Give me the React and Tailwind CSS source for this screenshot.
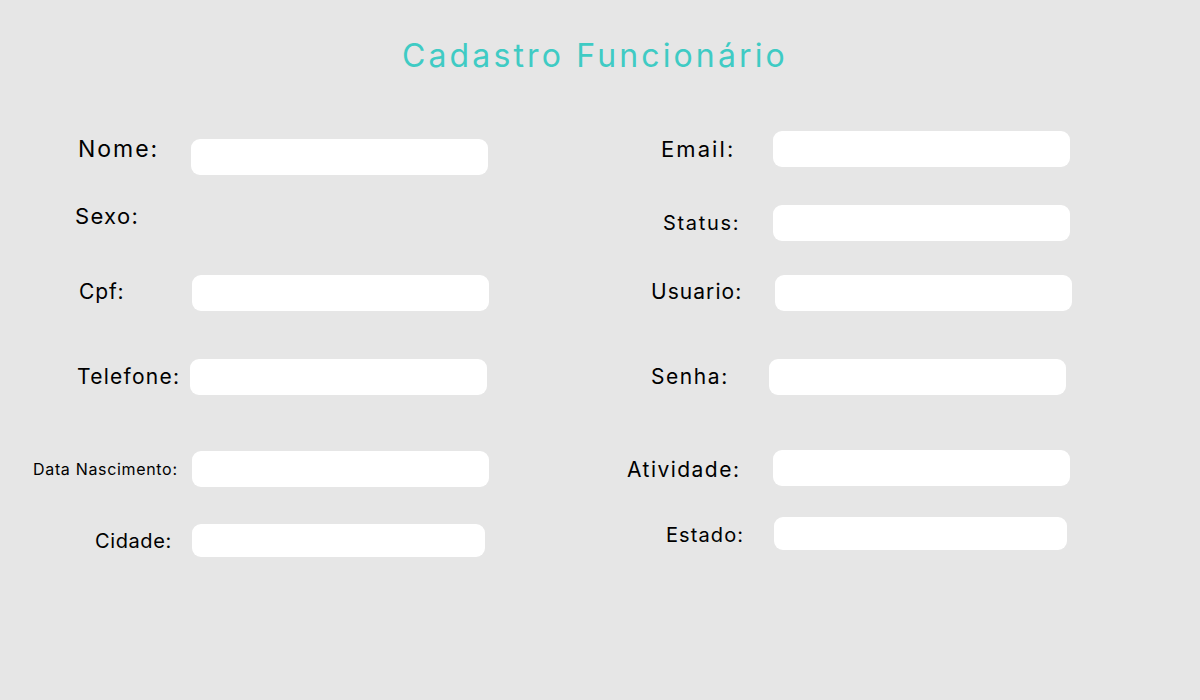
export default function App() {
  return (
    <div className="w-[1200px] h-[700px] bg-[#e6e6e6] text-black overflow-hidden" style={{ fontFamily: 'Inter, "Open Sans", sans-serif' }}>
      <div className="pt-[40px] pl-[402px]">
        <h1 className="h-[32px] text-[32px] leading-none font-normal text-[#3fcbc4] tracking-[0.098em] whitespace-nowrap">Cadastro Funcionário</h1>
      </div>
      <div className="flex">
        {/* left column */}
        <div className="w-[600px] flex flex-col">
          <div className="flex items-start mt-[67px]">
            <div className="w-[191px] shrink-0 pl-[78px] mt-[-1.5px] text-[23px] leading-none tracking-[0.085em] whitespace-nowrap">Nome:</div>
            <div className="w-[297px] h-[36px] rounded-[9px] bg-white"></div>
          </div>
          <div className="flex items-start mt-[30px]">
            <div className="w-[191px] shrink-0 pl-[75px] text-[22px] leading-none tracking-[0.06em] whitespace-nowrap">Sexo:</div>
          </div>
          <div className="flex items-start mt-[48px]">
            <div className="w-[192px] shrink-0 pl-[79px] mt-[6px] text-[21px] leading-none tracking-[0.04em] whitespace-nowrap">Cpf:</div>
            <div className="w-[297px] h-[36px] rounded-[9px] bg-white"></div>
          </div>
          <div className="flex items-start mt-[48px]">
            <div className="w-[190px] shrink-0 pl-[77px] mt-[7px] text-[21px] leading-none tracking-[0.06em] whitespace-nowrap">Telefone:</div>
            <div className="w-[297px] h-[36px] rounded-[9px] bg-white"></div>
          </div>
          <div className="flex items-start mt-[56px]">
            <div className="w-[192px] shrink-0 pl-[33px] mt-[10px] text-[16px] leading-none tracking-[0.042em] whitespace-nowrap">Data Nascimento:</div>
            <div className="w-[297px] h-[36px] rounded-[9px] bg-white"></div>
          </div>
          <div className="flex items-start mt-[37px]">
            <div className="w-[192px] shrink-0 pl-[95px] mt-[7px] text-[20px] leading-none tracking-[0.03em] whitespace-nowrap">Cidade:</div>
            <div className="w-[293px] h-[33px] rounded-[9px] bg-white"></div>
          </div>
        </div>
        {/* right column */}
        <div className="w-[600px] flex flex-col">
          <div className="flex items-start mt-[59px]">
            <div className="w-[173px] shrink-0 pl-[61px] mt-[7px] text-[22px] leading-none tracking-[0.095em] whitespace-nowrap">Email:</div>
            <div className="w-[297px] h-[36px] rounded-[9px] bg-white"></div>
          </div>
          <div className="flex items-start mt-[38px]">
            <div className="w-[173px] shrink-0 pl-[63px] mt-[8px] text-[20px] leading-none tracking-[0.085em] whitespace-nowrap">Status:</div>
            <div className="w-[297px] h-[36px] rounded-[9px] bg-white"></div>
          </div>
          <div className="flex items-start mt-[34px]">
            <div className="w-[175px] shrink-0 pl-[51px] mt-[6px] text-[21px] leading-none tracking-[0.05em] whitespace-nowrap">Usuario:</div>
            <div className="w-[297px] h-[36px] rounded-[9px] bg-white"></div>
          </div>
          <div className="flex items-start mt-[48px]">
            <div className="w-[169px] shrink-0 pl-[51px] mt-[7px] text-[21px] leading-none tracking-[0.075em] whitespace-nowrap">Senha:</div>
            <div className="w-[297px] h-[36px] rounded-[9px] bg-white"></div>
          </div>
          <div className="flex items-start mt-[55px]">
            <div className="w-[173px] shrink-0 pl-[27px] mt-[8.5px] text-[21px] leading-none tracking-[0.07em] whitespace-nowrap">Atividade:</div>
            <div className="w-[297px] h-[36px] rounded-[9px] bg-white"></div>
          </div>
          <div className="flex items-start mt-[31px]">
            <div className="w-[174px] shrink-0 pl-[66px] mt-[7.5px] text-[20px] leading-none tracking-[0.055em] whitespace-nowrap">Estado:</div>
            <div className="w-[293px] h-[33px] rounded-[9px] bg-white"></div>
          </div>
        </div>
      </div>
    </div>
  );
}
